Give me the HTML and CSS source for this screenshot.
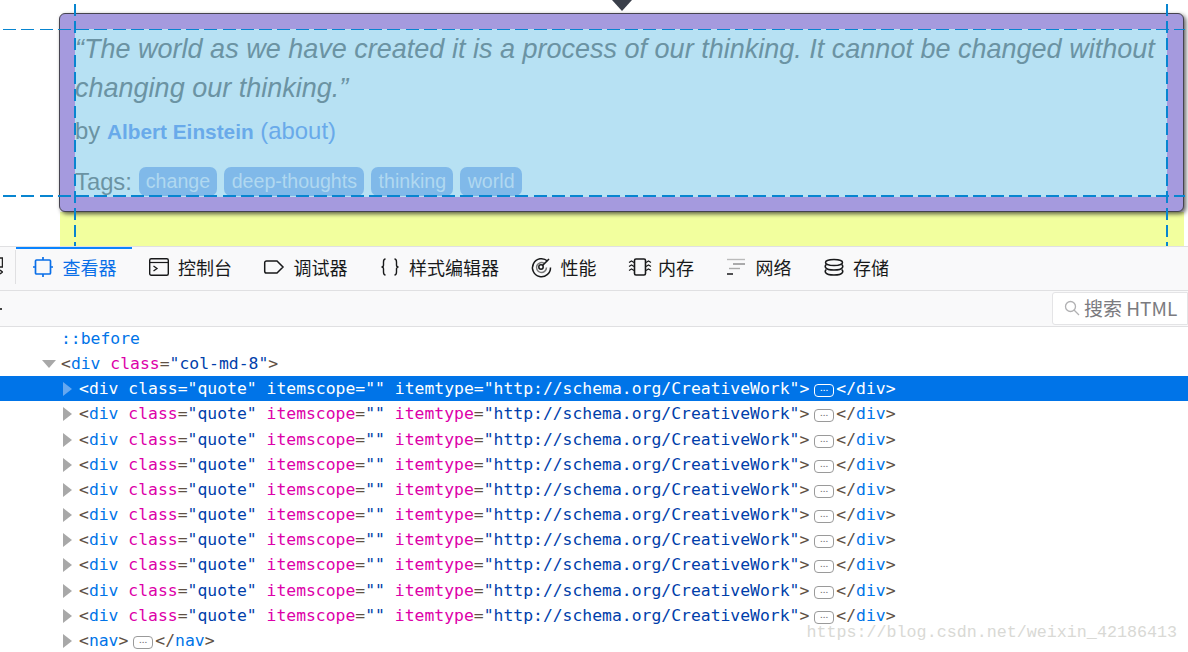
FILE: index.html
```html
<!DOCTYPE html>
<html lang="zh">
<head>
<meta charset="utf-8">
<title>Inspector</title>
<link rel="stylesheet" href="styles.css">
</head>
<body>
<section class="page">
  <div class="quote-box">
    <div class="quote-content">
      <div class="quote-text">“The world as we have created it is a process of our thinking. It cannot be changed without changing our thinking.”</div>
      <div class="quote-by">by <b class="author">Albert Einstein</b> <span class="link">(about)</span></div>
      <div class="quote-tags">Tags: <span class="chip">change</span><span class="chip">deep-thoughts</span><span class="chip">thinking</span><span class="chip">world</span></div>
    </div>
  </div>
  <div class="yellow"></div>
  <div class="caret"></div>
  <div class="guide h g1"></div>
  <div class="guide h g2"></div>
  <div class="guide v g3"></div>
  <div class="guide v g4"></div>
</section>
<nav class="tabs">
  <div class="stub"><svg class="frag" viewBox="0 0 3 20"><path d="M0 1h2.500v9H0M0 13l2.500 2L0 17" fill="none" stroke="#222" stroke-width="1.500"/></svg></div>
  <div class="tab active">
    <svg class="ico" viewBox="0 0 20 20"><rect x="2.500" y="3" width="15" height="14" rx="1" fill="none" stroke="currentColor" stroke-width="1.700"/><path d="M10 0v3M10 17v3M0 10h3M17 10h3" stroke="currentColor" stroke-width="1.700"/></svg>
    <span>查看器</span>
  </div>
  <div class="tab">
    <svg class="ico" viewBox="0 0 20 20"><rect x="0.700" y="1.700" width="18.600" height="16.600" rx="1.500" fill="none" stroke="currentColor" stroke-width="1.400"/><path d="M1 5.500h18" stroke="currentColor" stroke-width="1.200"/><path d="M4.500 9l3.500 2.500L4.500 14" fill="none" stroke="currentColor" stroke-width="1.300"/></svg>
    <span>控制台</span>
  </div>
  <div class="tab">
    <svg class="ico" viewBox="0 0 20 20"><path d="M2.500 4h10.500l6 6-6 6H2.500a1.800 1.800 0 0 1-1.800-1.800V5.800A1.800 1.800 0 0 1 2.500 4z" fill="none" stroke="currentColor" stroke-width="1.500"/></svg>
    <span>调试器</span>
  </div>
  <div class="tab">
    <svg class="ico" viewBox="0 0 20 20"><path d="M5.500 2C3.500 2 3.500 3.500 3.500 5v3c0 1-.5 2-2 2 1.500 0 2 1 2 2v3c0 1.500 0 3 2 3M14.500 2c2 0 2 1.500 2 3v3c0 1 .5 2 2 2-1.500 0-2 1-2 2v3c0 1.500 0 3-2 3" fill="none" stroke="currentColor" stroke-width="1.400"/></svg>
    <span>样式编辑器</span>
  </div>
  <div class="tab">
    <svg class="ico" viewBox="0 0 20 20"><path d="M16.500 4A9 9 0 1 0 19.500 10.500" fill="none" stroke="currentColor" stroke-width="1.500"/><path d="M13.500 6.500A5 5 0 1 0 15.500 10.500" fill="none" stroke="#777" stroke-width="1.500"/><circle cx="10" cy="10" r="2.200" fill="none" stroke="currentColor" stroke-width="1.500"/><path d="M11.500 8.500l6.500-6.500" stroke="currentColor" stroke-width="1.600"/></svg>
    <span>性能</span>
  </div>
  <div class="tab">
    <svg class="ico wide" viewBox="0 0 20 20"><rect x="5.500" y="2" width="11" height="16" rx="1.500" fill="none" stroke="currentColor" stroke-width="1.600"/><path d="M5 5.500L2.500 4 0 5.500M5 9.500L2.500 8 0 9.500M5 13.500L2.500 12 0 13.500M17 5.500L19.500 4 22 5.500M17 9.500L19.500 8 22 9.500M17 13.500L19.500 12 22 13.500" fill="none" stroke="currentColor" stroke-width="1.100"/></svg>
    <span>内存</span>
  </div>
  <div class="tab">
    <svg class="ico" viewBox="0 0 20 20"><path d="M1 2.500h18" stroke="#bbb" stroke-width="1.400"/><path d="M7 7h12" stroke="#888" stroke-width="1.400"/><path d="M3 11.500h11" stroke="#aaa" stroke-width="1.400"/><path d="M1 17h6" stroke="currentColor" stroke-width="1.500"/></svg>
    <span>网络</span>
  </div>
  <div class="tab">
    <svg class="ico" viewBox="0 0 20 20"><g fill="none" stroke="currentColor" stroke-width="1.500" transform="translate(0 1)"><ellipse cx="10" cy="4.500" rx="8.500" ry="3"/><path d="M2.400 6.500C1 7.500 1 8.500 1.500 9.500c1 1.500 3.500 2.500 8.500 2.500s7.500-1 8.500-2.500c.5-1 .5-2-.9-3"/><path d="M2.400 11.500C1 12.500 1 13.500 1.500 14.500c1 1.500 3.500 2.500 8.500 2.500s7.500-1 8.500-2.500c.5-1 .5-2-.9-3"/></g></svg>
    <span>存储</span>
  </div>
</nav>
<div class="searchbar">
  <div class="mark"></div>
  <div class="search">
    <svg class="mag" viewBox="0 0 16 16"><circle cx="6.500" cy="6.500" r="5" fill="none" stroke="#b1b1b3" stroke-width="1.300"/><path d="M10 10l5 5" stroke="#b1b1b3" stroke-width="1.300"/></svg>
    <span>搜索 HTML</span>
  </div>
</div>
<main class="tree">
  <div class="row d1"><span class="tn">::before</span></div>
  <div class="row d0"><i class="tw open"></i><span class="p">&lt;</span><span class="tn">div</span> <span class="an">class</span><span class="p">=</span><span class="av">"col-md-8"</span><span class="p">&gt;</span></div>
  <div class="row d1 sel"><i class="tw"></i><span class="p">&lt;</span><span class="tn">div</span> <span class="an">class</span><span class="p">=</span><span class="av">"quote"</span> <span class="an">itemscope</span><span class="p">=</span><span class="av">""</span> <span class="an">itemtype</span><span class="p">=</span><span class="av">"http://schema.org/CreativeWork"</span><span class="p">&gt;</span><span class="more">...</span><span class="p">&lt;/</span><span class="tn">div</span><span class="p">&gt;</span></div>
  <div class="row d1"><i class="tw"></i><span class="p">&lt;</span><span class="tn">div</span> <span class="an">class</span><span class="p">=</span><span class="av">"quote"</span> <span class="an">itemscope</span><span class="p">=</span><span class="av">""</span> <span class="an">itemtype</span><span class="p">=</span><span class="av">"http://schema.org/CreativeWork"</span><span class="p">&gt;</span><span class="more">...</span><span class="p">&lt;/</span><span class="tn">div</span><span class="p">&gt;</span></div>
  <div class="row d1"><i class="tw"></i><span class="p">&lt;</span><span class="tn">div</span> <span class="an">class</span><span class="p">=</span><span class="av">"quote"</span> <span class="an">itemscope</span><span class="p">=</span><span class="av">""</span> <span class="an">itemtype</span><span class="p">=</span><span class="av">"http://schema.org/CreativeWork"</span><span class="p">&gt;</span><span class="more">...</span><span class="p">&lt;/</span><span class="tn">div</span><span class="p">&gt;</span></div>
  <div class="row d1"><i class="tw"></i><span class="p">&lt;</span><span class="tn">div</span> <span class="an">class</span><span class="p">=</span><span class="av">"quote"</span> <span class="an">itemscope</span><span class="p">=</span><span class="av">""</span> <span class="an">itemtype</span><span class="p">=</span><span class="av">"http://schema.org/CreativeWork"</span><span class="p">&gt;</span><span class="more">...</span><span class="p">&lt;/</span><span class="tn">div</span><span class="p">&gt;</span></div>
  <div class="row d1"><i class="tw"></i><span class="p">&lt;</span><span class="tn">div</span> <span class="an">class</span><span class="p">=</span><span class="av">"quote"</span> <span class="an">itemscope</span><span class="p">=</span><span class="av">""</span> <span class="an">itemtype</span><span class="p">=</span><span class="av">"http://schema.org/CreativeWork"</span><span class="p">&gt;</span><span class="more">...</span><span class="p">&lt;/</span><span class="tn">div</span><span class="p">&gt;</span></div>
  <div class="row d1"><i class="tw"></i><span class="p">&lt;</span><span class="tn">div</span> <span class="an">class</span><span class="p">=</span><span class="av">"quote"</span> <span class="an">itemscope</span><span class="p">=</span><span class="av">""</span> <span class="an">itemtype</span><span class="p">=</span><span class="av">"http://schema.org/CreativeWork"</span><span class="p">&gt;</span><span class="more">...</span><span class="p">&lt;/</span><span class="tn">div</span><span class="p">&gt;</span></div>
  <div class="row d1"><i class="tw"></i><span class="p">&lt;</span><span class="tn">div</span> <span class="an">class</span><span class="p">=</span><span class="av">"quote"</span> <span class="an">itemscope</span><span class="p">=</span><span class="av">""</span> <span class="an">itemtype</span><span class="p">=</span><span class="av">"http://schema.org/CreativeWork"</span><span class="p">&gt;</span><span class="more">...</span><span class="p">&lt;/</span><span class="tn">div</span><span class="p">&gt;</span></div>
  <div class="row d1"><i class="tw"></i><span class="p">&lt;</span><span class="tn">div</span> <span class="an">class</span><span class="p">=</span><span class="av">"quote"</span> <span class="an">itemscope</span><span class="p">=</span><span class="av">""</span> <span class="an">itemtype</span><span class="p">=</span><span class="av">"http://schema.org/CreativeWork"</span><span class="p">&gt;</span><span class="more">...</span><span class="p">&lt;/</span><span class="tn">div</span><span class="p">&gt;</span></div>
  <div class="row d1"><i class="tw"></i><span class="p">&lt;</span><span class="tn">div</span> <span class="an">class</span><span class="p">=</span><span class="av">"quote"</span> <span class="an">itemscope</span><span class="p">=</span><span class="av">""</span> <span class="an">itemtype</span><span class="p">=</span><span class="av">"http://schema.org/CreativeWork"</span><span class="p">&gt;</span><span class="more">...</span><span class="p">&lt;/</span><span class="tn">div</span><span class="p">&gt;</span></div>
  <div class="row d1"><i class="tw"></i><span class="p">&lt;</span><span class="tn">div</span> <span class="an">class</span><span class="p">=</span><span class="av">"quote"</span> <span class="an">itemscope</span><span class="p">=</span><span class="av">""</span> <span class="an">itemtype</span><span class="p">=</span><span class="av">"http://schema.org/CreativeWork"</span><span class="p">&gt;</span><span class="more">...</span><span class="p">&lt;/</span><span class="tn">div</span><span class="p">&gt;</span></div>
  <div class="row d1"><i class="tw"></i><span class="p">&lt;</span><span class="tn">nav</span><span class="p">&gt;</span><span class="more">...</span><span class="p">&lt;/</span><span class="tn">nav</span><span class="p">&gt;</span></div>
  <div class="watermark">https://blog.csdn.net/weixin_42186413</div>
</main>
</body>
</html>
```
FILE: styles.css
```css
* { box-sizing: border-box; }
html, body { margin: 0; padding: 0; }
body {
  width: 1188px;
  height: 652px;
  overflow: hidden;
  background: #fff;
  font-family: "Liberation Sans", Arial, sans-serif;
}

/* page under the inspector highlight */
.page {
  position: relative;
  height: 246px;
  padding: 13px 4px 0 59px;
  overflow: hidden;
}
.quote-box {
  height: 199px;
  padding: 15px 16px 14px 15px;
  background: #a59ade;
  border: 1px solid #45434f;
  border-radius: 6px;
  box-shadow: 2px 2px 4px rgba(30, 30, 30, .7);
  position: relative;
}
.quote-content {
  height: 168px;
  background: #b7e1f3;
  color: #6b93a3;
  overflow: hidden;
}
.quote-text {
  font-style: italic;
  font-size: 27.030px;
  line-height: 39px;
  padding-top: 1px;
}
.quote-by {
  font-size: 23.900px;
  line-height: 34px;
  margin-top: 6px;
}
.author { font-size: 20.800px; color: #69aaea; }
.link { color: #69aaea; }
.quote-tags {
  font-size: 23.800px;
  line-height: 29px;
  margin-top: 18px;
  white-space: nowrap;
}
.chip {
  display: inline-block;
  padding: 0 7.300px;
  height: 29px;
  line-height: 29px;
  font-size: 19.600px;
  background: #80b9e9;
  color: #b0d8f0;
  border-radius: 7px;
  vertical-align: top;
}
.chip + .chip { margin-left: 7px; }
.yellow {
  margin-left: 1px;
  height: 34px;
  background: #f2ff9e;
}
.caret {
  position: absolute;
  left: 612px;
  top: 0;
  width: 0;
  height: 0;
  border-left: 10px solid transparent;
  border-right: 10px solid transparent;
  border-top: 11px solid #3a3f4a;
}
.guide { position: absolute; }
.guide.h {
  left: 3px;
  right: 3px;
  background: repeating-linear-gradient(to right, #0885d0 0 13px, transparent 13px 18.300px);
}
.guide.v {
  top: 4px;
  bottom: 0;
  width: 2px;
  background: repeating-linear-gradient(to bottom, #0885d0 0 12px, transparent 12px 17px);
}
.g1 { top: 29px; height: 1px; }
.g2 { top: 195px; height: 2px; }
.g3 { left: 74px; }
.g4 { left: 1166px; }

/* devtools tabs */
.tabs {
  height: 45px;
  display: flex;
  align-items: stretch;
  background: #f9f9fa;
  border-top: 1px solid #e0e0e2;
  border-bottom: 1px solid #e0e0e2;
  font-family: "Noto Sans CJK SC", "Noto Sans", sans-serif;
  font-size: 18px;
  color: #18191a;
}
.stub {
  width: 16px;
  margin: 3px 0 6px;
  border-right: 1px solid #e0e0e2;
  display: flex;
  align-items: center;
}
.frag { width: 3px; height: 20px; }
.tab {
  display: flex;
  align-items: center;
  gap: 9.500px;
  padding: 0 15px 5px 17px;
  border-top: 2px solid transparent;
}
.tab.active { color: #0a6fe8; border-top-color: #0a84ff; }
.ico { width: 20px; height: 20px; flex: none; overflow: visible; }

/* search bar */
.searchbar {
  height: 36px;
  display: flex;
  justify-content: space-between;
  align-items: center;
  background: #f9f9fa;
  border-bottom: 1px solid #e0e0e2;
}
.mark { width: 2px; height: 2px; background: #444; }
.search {
  width: 136px;
  height: 33px;
  display: flex;
  align-items: center;
  gap: 4px;
  padding: 0 0 2px 11px;
  background: #fff;
  border: 1px solid #e4e4e6;
  border-radius: 3px 0 0 3px;
  font-family: "Noto Sans CJK SC", "Noto Sans", sans-serif;
  font-size: 19px;
  color: #7b7b80;
  white-space: nowrap;
}
.mag { width: 16px; height: 16px; flex: none; }

/* markup tree */
.tree {
  position: relative;
  margin-top: -1px;
  font-family: "DejaVu Sans Mono", monospace;
  font-size: 16.400px;
}
.row {
  position: relative;
  height: 25.170px;
  line-height: 25px;
  white-space: pre;
  color: #4a4a4f;
}
.d0 { padding-left: 61px; }
.d1 { padding-left: 79px; }
.d1:first-child { padding-left: 61px; }
.tn { color: #0074e8; }
.an { color: #dd00a9; }
.av { color: #003eaa; }
.p { color: #5f5145; }
.tw {
  position: absolute;
  left: 63px;
  top: 6px;
  width: 0;
  height: 0;
  border-left: 9px solid #a8a8a8;
  border-top: 7px solid transparent;
  border-bottom: 7px solid transparent;
}
.tw.open {
  left: 42px;
  top: 9px;
  border-left: 7px solid transparent;
  border-right: 7px solid transparent;
  border-top: 8px solid #a8a8a8;
  border-bottom: 0;
}
.more {
  display: inline-block;
  width: 20px;
  height: 13px;
  margin: 0 2px 0 5px;
  border: 1px solid #9a9a9a;
  border-radius: 4px;
  color: #777;
  font-family: "Liberation Sans", sans-serif;
  font-size: 8px;
  font-weight: bold;
  letter-spacing: .5px;
  line-height: 7px;
  text-align: center;
  vertical-align: 3px;
}
.sel { background: #0074e8; color: #fff; }
.sel .tn, .sel .an, .sel .av, .sel .p { color: #fff; }
.sel .tw { border-left-color: #66a8f0; }
.sel .more { border-color: #fff; color: #fff; }
.watermark {
  position: absolute;
  right: 11px;
  bottom: 8px;
  font-family: "Liberation Mono", monospace;
  font-size: 16.700px;
  line-height: 24px;
  color: #d9d9d5;
}
```
